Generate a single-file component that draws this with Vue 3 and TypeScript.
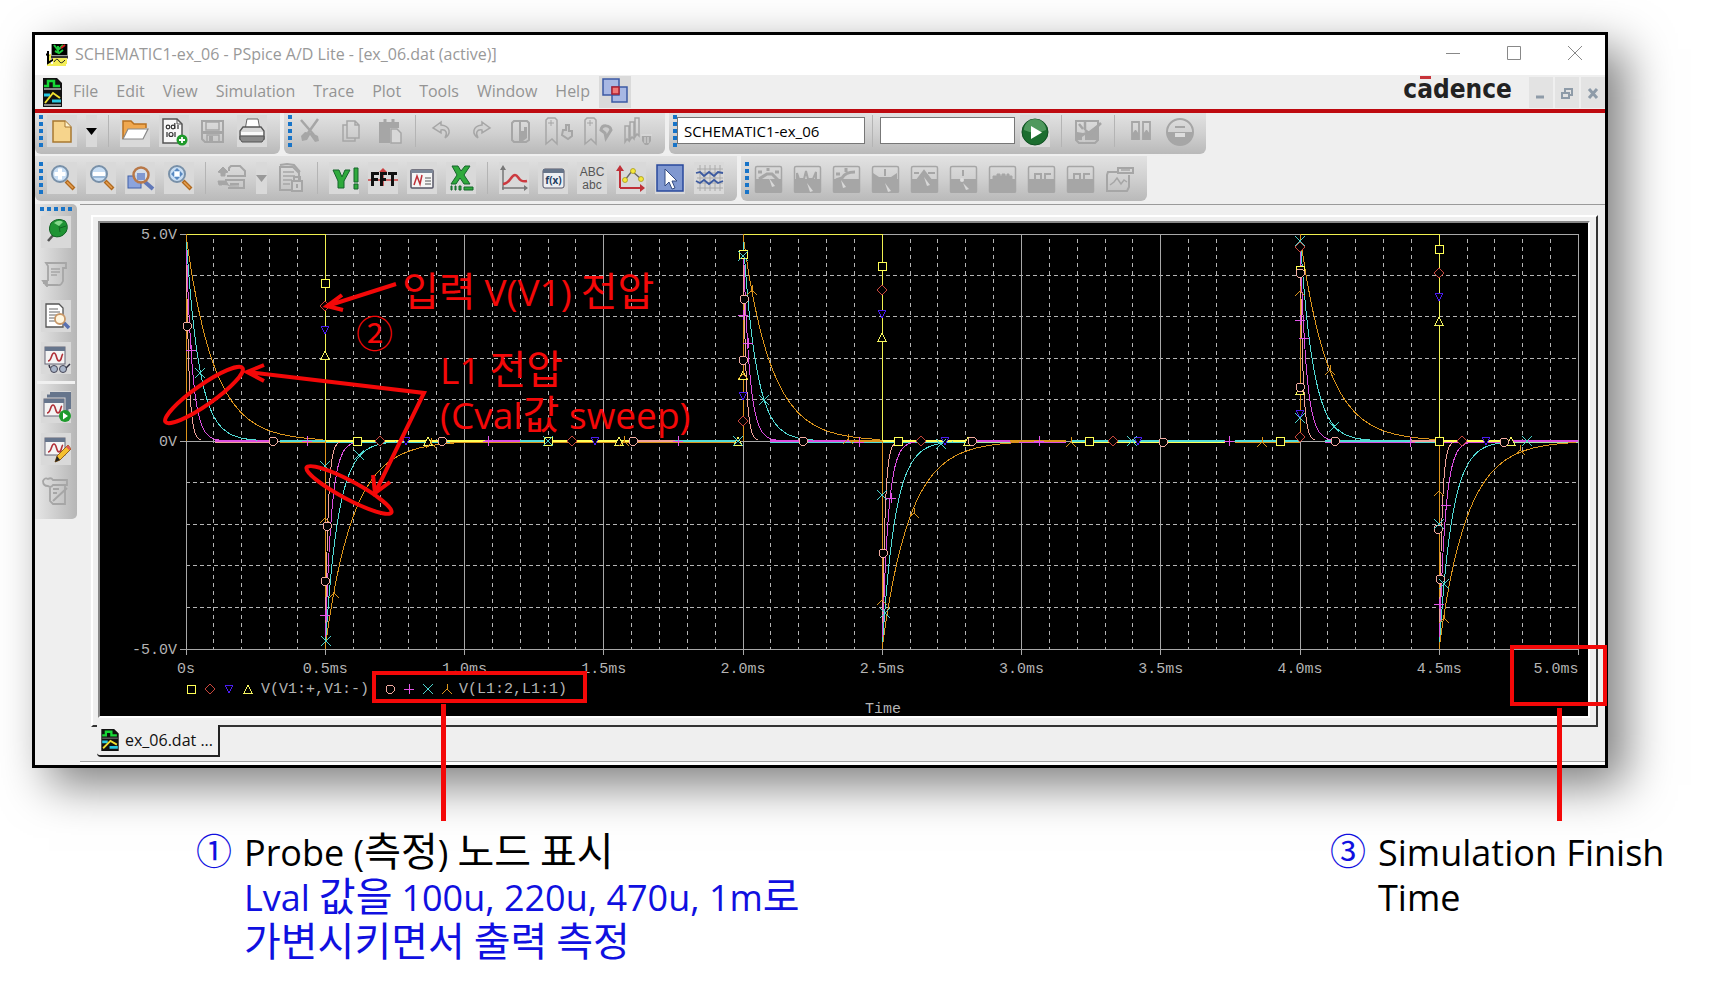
<script setup lang="ts">
interface Tool {
  icon: string
  label: string
  kind?: 'off' | 'drop' | 'sep'
}

interface Marker {
  shape: string
  x: number
  y: number
}

const sep: Tool = { icon: '', label: '', kind: 'sep' }
const off = (icon: string, label: string): Tool => ({ icon, label, kind: 'off' })
const on = (icon: string, label: string): Tool => ({ icon, label })

const menus = ['File', 'Edit', 'View', 'Simulation', 'Trace', 'Plot', 'Tools', 'Window', 'Help']

const fileTools: Tool[] = [
  on('new', 'New'), { icon: 'drop', label: 'New options', kind: 'drop' }, sep,
  on('open', 'Open'), on('append', 'Append data'), off('save', 'Save'), on('print', 'Print'),
]
const editTools: Tool[] = [
  off('cut', 'Cut'), off('copy', 'Copy'), off('paste', 'Paste'), sep,
  off('undo', 'Undo'), off('redo', 'Redo'), off('toggle', 'Toggle bookmark'),
  off('nextmark', 'Next bookmark'), off('prevmark', 'Previous bookmark'), off('clearmarks', 'Clear bookmarks'),
]
const runTools: Tool[] = [
  sep, off('editprofile', 'Edit profile'), sep, off('pause', 'Pause'), off('stop', 'Stop'),
]
const probeTools: Tool[] = [
  on('zoomin', 'Zoom in'), on('zoomout', 'Zoom out'), on('zoomarea', 'Zoom area'), on('zoomfit', 'Zoom fit'), sep,
  off('cascade', 'Sweep'), { icon: 'dropoff', label: 'Sweep options', kind: 'drop' }, off('lock', 'Lock'), sep,
  on('yaxis', 'Log axis'), on('fft', 'FFT'), on('perf', 'Performance'), on('xaxis', 'Log X axis'), sep,
  on('trace', 'Add trace'), on('eval', 'Evaluate'), on('abc', 'Text label'), on('points', 'Mark points'),
  on('cursor', 'Cursor'), on('grid', 'Display grid'),
]
const cursorTools: Tool[] = [
  off('c1', 'Peak'), off('c2', 'Trough'), off('c3', 'Slope'), off('c4', 'Minimum'), off('c5', 'Maximum'),
  off('c6', 'Point'), off('c7', 'Search'), off('c8', 'Next transition'), off('c9', 'Previous transition'), off('mark', 'Mark label'),
]
const sideTools: Tool[] = [
  on('pin', 'Pin'), off('scroll', 'Netlist'), on('find', 'View output file'), on('glasses', 'View results'), sep,
  on('queue', 'Simulation queue'), on('pencil', 'Edit settings'), off('notes', 'Messages'),
]

const g = '#a6a6a6'
const lens = (inner: string, ring = '#7890a8') =>
  `<path d="M19 18l8 8" stroke="#b06a20" stroke-width="4"/><path d="M20 19l6 6" stroke="#e8a050" stroke-width="1.5"/><circle cx="13" cy="11" r="8" fill="#c8def4" stroke="${ring}" stroke-width="2"/>${inner}`
const gauge = (inner: string) =>
  `<rect x="2.500" y="3.500" width="26" height="26" rx="1.500" fill="none" stroke="${g}" stroke-width="1.500"/><path d="M2 16H28V29H2Z" fill="${g}"/>${inner}`
const chart = (x: number, y: number) =>
  `<rect x="${x}" y="${y}" width="20" height="17" fill="#f4f4f4" stroke="#667"/><rect x="${x}" y="${y}" width="20" height="4" fill="#66758c"/><path d="M${x + 3} ${y + 14}c4 0 3-8 6-8s2 8 5 8 2-6 4-7" fill="none" stroke="#b03038" stroke-width="1.600"/>`

const icons: Record<string, string> = {
  new: '<path d="M6 5h12l6 6v15H6z" fill="#f6d48c" stroke="#a87830" stroke-width="1.500"/><path d="M18 5v6h6" fill="#fff2cc" stroke="#a87830"/>',
  drop: '<path d="M0 12h11l-5.500 7z" fill="#000"/>',
  dropoff: '<path d="M0 12h11l-5.500 7z" fill="#999"/>',
  open: '<path d="M3 23V5h8l3 3h12v4" fill="#f0a850" stroke="#b87020" stroke-width="1.500"/><path d="M3 23l5-10h20l-5 10z" fill="#fff" stroke="#888" stroke-width="1.200"/>',
  append: '<path d="M4 3h14l5 5v19H4z" fill="#f8f8f8" stroke="#555" stroke-width="1.500"/><path d="M18 3v5h5" fill="none" stroke="#555"/><g fill="none" stroke="#333" stroke-width="1.200"><circle cx="9" cy="11" r="1.800"/><circle cx="14" cy="11" r="1.800"/><path d="M15.800 7v6M19 9v4M8 16v5M16 16v5"/><circle cx="12" cy="18.500" r="2"/></g><circle cx="23" cy="24" r="5.500" fill="#1e9a2a"/><path d="M20 24h6M23 21v6" stroke="#fff" stroke-width="1.800"/>',
  save: `<path d="M4 5h21v21H7l-3-3z" fill="none" stroke="${g}" stroke-width="2"/><path d="M8 6h13v8H8zM9 19h12v7H9z" fill="none" stroke="${g}" stroke-width="1.500"/><path d="M4 15h21v3H4zM11 20h4v6h-4z" fill="${g}"/>`,
  print: '<path d="M8 14L10 3h11l2 11z" fill="#fff" stroke="#666"/><path d="M3 15l3-4h18l3 4v8H3z" fill="#d8d8d8" stroke="#555" stroke-width="1.300"/><path d="M4 16h22v3H4z" fill="#fafafa"/><path d="M3 20h24v3l-2 3H5l-2-3z" fill="#8a8a8a" stroke="#555"/>',
  cut: `<path d="M5 4l13 15M22 3L12 17" stroke="${g}" stroke-width="2.500"/><path d="M9 16l-4 4 1 5 5-1 3-5 5 7 4-1-1-5-6-3z" fill="${g}"/>`,
  copy: `<path d="M12 5h8l4 4v13H12zM12 9H8v16h12v-3M20 5v4h4" fill="none" stroke="${g}" stroke-width="1.500"/>`,
  paste: `<path d="M5 6h20v6h-9v15H5z" fill="${g}"/><path d="M11 3v3M19 3v3" stroke="${g}" stroke-width="3"/><path d="M17 13h6l4 4v10H17z" fill="#d8d8d8" stroke="${g}" stroke-width="1.500"/>`,
  undo: `<path d="M14 6l-8 6 8 5v-3c5-1 7 3 4 8 6-4 6-12-4-13z" fill="#d2d2d2" stroke="${g}" stroke-width="1.500"/>`,
  redo: `<path d="M16 6l8 6-8 5v-3c-5-1-7 3-4 8-6-4-6-12 4-13z" fill="#d2d2d2" stroke="${g}" stroke-width="1.500"/>`,
  toggle: `<path d="M7 7l2-2h13l2 2v17l-3 2H9l-2-2zM15 5v21" fill="none" stroke="${g}" stroke-width="2"/><path d="M16 15h3v-4h3v11l-4 3h-2z" fill="${g}"/>`,
  nextmark: `<path d="M2 4l2-2h7l2 2v24l-5-5-6 5z" fill="none" stroke="${g}" stroke-width="1.500"/><path d="M7 4v6M4 7h6" stroke="${g}"/><path d="M19 14h3V9h3v6h3v5l-4 3-6-4z" fill="#ccc" stroke="${g}" stroke-width="2"/>`,
  prevmark: `<path d="M2 4l2-2h7l2 2v24l-5-5-6 5z" fill="none" stroke="${g}" stroke-width="1.500"/><path d="M7 4v6M4 7h6" stroke="${g}"/><path d="M18 14c1-6 9-5 10 0l-5 8-1-5z" fill="#ccc" stroke="${g}" stroke-width="3"/>`,
  clearmarks: `<path d="M3 10h4v15l-2-2-2 3zM8 6h4v17l-2-2-2 3zM13 2h4v18l-2-2-2 3z" fill="none" stroke="${g}" stroke-width="1.500"/><path d="M20 20h9v5l-3 4h-3l-3-4z" fill="${g}"/><path d="M19 19h11M23 21v6M26 21v6" stroke="#ddd"/>`,
  play: '<circle cx="15" cy="16" r="13" fill="#1c6e30" stroke="#0f5022"/><path d="M4 14a11 11 0 0 1 22 0q-11 5-22 0" fill="#6cb078" opacity=".65"/><path d="M11 10l11 6.500-11 6.500z" fill="#fff"/>',
  editprofile: `<path d="M3 5h22v19l-3 3H6l-3-3z" fill="none" stroke="${g}" stroke-width="2"/><path d="M4 16l6 1 6-2 8-6v15H4z" fill="${g}"/><path d="M6 8l4 5M12 6v8M12 14l5 4L28 7" stroke="${g}" stroke-width="2.500" fill="none"/><path d="M9 25v-4l3-2v7" fill="#ccc"/>`,
  pause: `<path d="M6 6h7v17H6zM17 6h7v17h-7z" fill="none" stroke="${g}" stroke-width="1.800"/><path d="M6 18l3-4h1l3 4v6H6zM17 18l3-4h1l3 4v6h-7z" fill="${g}"/>`,
  stop: `<circle cx="15" cy="16" r="13" fill="none" stroke="${g}" stroke-width="2"/><path d="M2 16h26a13 13 0 0 1-26 0z" fill="${g}"/><path d="M10 11h10" stroke="${g}" stroke-width="2"/><path d="M10 17h10v4H10z" fill="#ddd"/>`,
  zoomin: lens('<path d="M13 5.500v11M7.500 11h11" stroke="#fff" stroke-width="4"/>'),
  zoomout: lens('<path d="M7 11h12" stroke="#fff" stroke-width="4"/><path d="M7 14h12" stroke="#6d93bb" stroke-width="1"/>'),
  zoomarea: '<rect x="3" y="13" width="13" height="12" fill="#8ca4dc" stroke="#4060a8"/><path d="M20 19l8 7" stroke="#6078b8" stroke-width="4"/><circle cx="16" cy="12" r="7.500" fill="#d4e0ee" fill-opacity=".8" stroke="#b87848" stroke-width="2.500"/><rect x="12" y="10" width="8" height="7" fill="#8098d0"/>',
  zoomfit: lens('<path d="M13 5l3 3h-6zM13 17l3-3h-6zM7 11l3-3v6zM19 11l-3-3v6z" fill="#5888c0"/><rect x="11" y="9" width="4" height="4" fill="#fff"/>'),
  cascade: `<path d="M12 8V5l2-2h9l5 5v5H17M8 17h19v8H11" fill="none" stroke="${g}" stroke-width="2"/><path d="M1 9l5-5 5 5-3 1v3H4v-3zM5 22H2l-1-4h8l3 5h10" fill="${g}" stroke="${g}"/><path d="M10 13h12M13 21h9" stroke="${g}" stroke-width="2"/>`,
  lock: `<path d="M4 4h13l6 6v17H4z" fill="none" stroke="${g}" stroke-width="2"/><path d="M4 2l7-1 7 1 6 7" stroke="${g}" stroke-width="2" fill="none"/><path d="M7 9h11M7 13h12M7 17h9M7 21h7" stroke="${g}" stroke-width="1.500"/><path d="M18 18v-4h6v4" stroke="${g}" stroke-width="2" fill="none"/><rect x="16" y="18" width="10" height="10" fill="#d0d0d0" stroke="${g}" stroke-width="2"/><path d="M21 21v4" stroke="${g}" stroke-width="2"/>`,
  yaxis: '<path d="M4 7h6l3 7 3-7h5l-6 11v7H9v-7z" fill="#2faa3c" stroke="#14642a"/><path d="M25 5h4v14h-4zM25 21h4v5h-4z" fill="#2faa3c" stroke="#14642a"/>',
  fft: '<path d="M15 8v15M0 17h30" stroke="#cc4040" stroke-width="1.500"/><path d="M11 9l4-4 4 4z" fill="#cc4040"/><g fill="none" stroke="#111" stroke-width="3"><path d="M4.500 23V10.500H11M4.500 16.500H10M13.500 23V10.500H19M13.500 16.500H18M20 10.500h9M24.500 10v13"/></g>',
  perf: '<rect x="4" y="7" width="22" height="18" rx="1" fill="#f6f6f6" stroke="#556" stroke-width="1.500"/><path d="M4 7h22v3H4z" fill="#7c8798"/><path d="M7 22l3-9 3 8 2-9" fill="none" stroke="#c03038" stroke-width="1.500"/><path d="M18 15h6M18 18h6M18 21h6" stroke="#555"/>',
  xaxis: '<path d="M6 3h6l3 5 4-5h5l-6 9 6 9h-6l-4-6-4 6H5l6-9z" fill="#2faa3c" stroke="#14642a"/><path d="M5 23h1v4H5zM9 23h1v4H9zM13 23h2v4h-2zM18 24h9v3h-9z" fill="#2faa3c" stroke="#14642a"/>',
  trace: '<path d="M4 27V5M3 25h25" stroke="#777" stroke-width="1.500"/><path d="M1 7l3-5 3 5zM25 22l4 3-4 3z" fill="#777"/><path d="M4 21c7 0 8-9 12-9s3 8 12 6" fill="none" stroke="#cc3a40" stroke-width="2.500"/>',
  eval: '<rect x="5" y="6" width="21" height="19" rx="2" fill="#eceef2" stroke="#556"/><rect x="5" y="6" width="21" height="4" fill="#667489"/><text x="15.500" y="21" font-family="Open Sans, sans-serif" font-size="10" font-weight="700" text-anchor="middle" fill="#223c60">f(x)</text>',
  abc: '<text x="15" y="13" font-family="Liberation Sans, sans-serif" font-size="12" text-anchor="middle" fill="#555">ABC</text><text x="15" y="26" font-family="Liberation Sans, sans-serif" font-size="12" text-anchor="middle" fill="#555">abc</text>',
  points: '<path d="M4 25V5M4 25h23" stroke="#c03038" stroke-width="2"/><path d="M0 8l4-6 4 6zM24 21l5 4-5 4z" fill="#c03038"/><path d="M9 17l7-9 9 8" fill="none" stroke="#666" stroke-width="1.300"/><g fill="#f4e83c" stroke="#a09010" stroke-width=".7"><circle cx="9" cy="17" r="2.500"/><circle cx="17" cy="8" r="2.500"/><circle cx="25" cy="16" r="2.500"/></g>',
  cursor: '<rect x="2" y="2" width="26" height="26" fill="#8098d0" stroke="#28489c" stroke-width="1.500"/><path d="M10 6v17l4-4 3 7 3-1-3-7h5z" fill="#fff" stroke="#334a80"/>',
  grid: '<path d="M3 6h26M3 10h26M3 15h26M3 20h26M3 25h26M6 2v26M11 2v26M16 2v26M21 2v26M26 2v26" stroke="#aaa"/><path d="M2 10l4-1 4 4 5-4 5 4 4-4 5 1M2 18l4 2 4-3 5 4 5-4 4 3 5-2" fill="none" stroke="#3c5aa0" stroke-width="1.800"/>',
  c1: gauge(`<path d="M6 16l8-5h5l7 7M15 5v3M5 9h4M22 9h4" stroke="${g}" stroke-width="3" fill="none"/><path d="M16 15l6 8-3 1z" fill="#d8d8d8"/>`),
  c2: gauge(`<path d="M5 16v-6l2 6h5l2-8 2 8h5l3-7v7" stroke="${g}" stroke-width="2" fill="none"/><path d="M15 20l6 8-3 1z" fill="#d8d8d8"/>`),
  c3: gauge(`<path d="M5 17l6-2q3-6 13-6M15 5v4M5 11h4" stroke="${g}" stroke-width="3" fill="none"/><path d="M10 17l5 7-3 1z" fill="#d8d8d8"/>`),
  c4: gauge(`<path d="M3 10l6 4h12l6-4v8H3z" fill="${g}"/><path d="M15 6v7" stroke="${g}" stroke-width="2"/><path d="M15 20l6 8-3 1z" fill="#d8d8d8"/>`),
  c5: gauge(`<path d="M5 10h5M19 10h7M8 17l7-9 7 9z" stroke="${g}" stroke-width="2" fill="${g}"/><path d="M15 14l6 8-3 1z" fill="#d8d8d8"/>`),
  c6: gauge(`<path d="M15 7v6" stroke="${g}" stroke-width="2"/><circle cx="14" cy="17" r="2" fill="#ddd"/><path d="M15 20l6 6-3 1z" fill="#d8d8d8"/>`),
  c7: gauge(`<path d="M6 16v-3h19v3zM10 13v-2h3v2M15 13v-2h3v2M20 13v-2h2v2" stroke="${g}" fill="${g}"/>`),
  c8: gauge(`<path d="M9 16v-5h6v5M19 16v-5h6" stroke="${g}" stroke-width="2" fill="none"/>`),
  c9: gauge(`<path d="M9 16v-5h6v5M19 16v-5h6" stroke="${g}" stroke-width="2" fill="none"/>`),
  mark: `<path d="M14 5h15v5H14zM13 9H4l-1 3v16h20l2-4V12" fill="none" stroke="${g}" stroke-width="2"/><path d="M17 7h9M6 22l4-3 3-4 4 6 3-4 3 2" fill="none" stroke="${g}" stroke-width="1.500"/>`,
  pin: '<path d="M7 24l7-8" stroke="#555" stroke-width="2.500"/><path d="M10 6q6-6 14-2 4 5 1 11-5 7-13 4-6-5-2-13z" fill="#1f9434" stroke="#106422"/><path d="M13 6q5-4 9-1l-4 4z" fill="#85d88c"/><path d="M18 9l1 6M19 11l6-2" stroke="#106422"/>',
  scroll: `<path d="M7 22V7l-2-3h20v5h-3v13q-2 5-5 4H5l-3-4h5M2 24h4v4" fill="none" stroke="${g}" stroke-width="1.800"/><path d="M10 10h9M10 13h9M10 16h6" stroke="${g}" stroke-width="1.300"/>`,
  find: '<path d="M5 3h13l4 4v19H5z" fill="#fff" stroke="#555" stroke-width="1.300"/><path d="M8 8h9M8 11h11M8 14h11M8 17h8M8 20h7" stroke="#666"/><path d="M22 21l6 6" stroke="#5870b0" stroke-width="3.500"/><circle cx="19" cy="18" r="5" fill="#fff6e0" stroke="#c89868" stroke-width="1.800"/>',
  glasses: chart(4, 4) + '<circle cx="13" cy="26" r="3.500" fill="#a8b4c8" stroke="#445"/><circle cx="22" cy="26" r="3.500" fill="#a8b4c8" stroke="#445"/><path d="M9 25l-1-3M25 25l4-4" stroke="#334" stroke-width="1.500"/>',
  queue: '<path d="M9 1h20v16M6 4h20v16" fill="none" stroke="#66758c" stroke-width="3"/>' + chart(3, 7) + '<circle cx="24" cy="24" r="6" fill="#1d9a2c"/><path d="M22 20.500l5 3.500-5 3.500z" fill="#fff"/>',
  pencil: chart(4, 4) + '<path d="M14 28l2-6L27 11l3 4-11 11z" fill="#f4c030" stroke="#906020"/><path d="M14 28l2-6 3 4z" fill="#222"/><path d="M25 13l2-2 3 4-2 1z" fill="#e05858"/>',
  notes: `<path d="M9 10v15l3 3h12V9M2 5q2-4 5-2 3-2 5 1h14v5H12q-2 3-5 1-5 0-5-5z" fill="none" stroke="${g}" stroke-width="1.800"/><path d="M12 13h6M12 17h4M12 25L26 12" stroke="${g}" stroke-width="2"/>`,
}

// Plot geometry: 5 ms across, ±5 V around the zero line.
const left = 186
const top = 234
const zero = 441
const bottom = 649
const msWidth = 278.5
const voltHeight = 41.5
const right = left + msWidth * 5
const px = (ms: number) => left + ms * msWidth
const py = (v: number) => zero - v * voltHeight

const minor = Array.from({ length: 50 }, (_, i) => i).filter((i) => i % 5 !== 0).map((i) => px(i / 10))
const major = [0, 1, 1.5, 2, 3, 3.5, 4, 5].map(px)
const ticks = Array.from({ length: 11 }, (_, i) => px(i / 2))
const rows = [1, 2, 3, 4, -1, -2, -3, -4].map(py)
const xLabels = Array.from({ length: 10 }, (_, i) => ({ x: px(i / 2), text: i === 0 ? '0s' : `${(i / 2).toFixed(1)}ms` }))

const decay = (tau: number, start: number, sign: number) => {
  const pts: string[] = []
  for (let i = 0; i <= 44; i++) {
    const t = (i / 44) * tau * 5.4
    if (start + t > 5 || t > 0.5) break
    pts.push(`${px(start + t).toFixed(1)},${py(sign * 4.97 * Math.exp(-t / tau)).toFixed(1)}`)
  }
  return pts.join(' ')
}
const edges = [[0, 1], [0.5, -1], [2, 1], [2.5, -1], [4, 1], [4.5, -1]]
const families = [
  { color: '#f0a39a', tau: 0.01 },
  { color: '#dc4fe0', tau: 0.022 },
  { color: '#52dcd6', tau: 0.047 },
  { color: '#dc951c', tau: 0.1 },
]
const curves = families.flatMap((f) => edges.map(([s, sign]) => ({ color: f.color, points: decay(f.tau, s, sign) })))

const zeroRuns = [
  [215, 273, '#dc4fe0', '#f0a39a'], [280, 325, '#52dcd6', '#dc951c'], [325, 450, '#ffff55', '#52dcd6'],
  [450, 485, '#ffff55', '#dc951c'], [485, 520, '#dc4fe0', '#dc951c'], [520, 545, '#52dcd6', '#dc951c'],
  [550, 638, '#ffff55', '#dc951c'], [638, 675, '#f0a39a', '#dc951c'], [675, 738, '#52dcd6', '#dc951c'],
  [770, 850, '#dc4fe0', '#52dcd6'], [850, 882, '#dc951c', '#52dcd6'], [882, 975, '#ffff55', '#52dcd6'],
  [975, 1010, '#dc4fe0', '#a4e8a0'], [1010, 1066, '#dc951c', '#dc4fe0'], [1072, 1160, '#52dcd6', '#ffff55'],
  [1160, 1225, '#52dcd6', '#ffff55'], [1235, 1300, '#52dcd6', '#dc951c'], [1325, 1410, '#52dcd6', '#dc4fe0'],
  [1412, 1439, '#f0a39a', '#52dcd6'], [1439, 1510, '#ffff55', '#dc4fe0'], [1510, 1578, '#dc4fe0', '#a4e8a0'],
] as [number, number, string, string][]

const shapes: Record<string, { d: string; color: string; fill: string }> = {
  s: { d: 'M-4-4H4V4H-4Z', color: '#ffff55', fill: '#000' },
  d: { d: 'M0-5L5 0L0 5L-5 0Z', color: '#c8463c', fill: '#000' },
  v: { d: 'M-4-4H4L0 4Z', color: '#4a1cf0', fill: '#000' },
  a: { d: 'M-4 4H4L0-4Z', color: '#f4f460', fill: '#000' },
  o: { d: 'M-2-4H2L4-2V2L2 4H-2L-4 2V-2Z', color: '#f0aaa0', fill: '#000' },
  p: { d: 'M-5 0H5M0-5V5', color: '#e455e8', fill: 'none' },
  x: { d: 'M-5-5L5 5M-5 5L5-5', color: '#4cd2cc', fill: 'none' },
  y: { d: 'M0-5V0L-5 5M0 0L5 5', color: '#dc951c', fill: 'none' },
}
const read = (text: string): Marker[] =>
  text.split(' ').map((item) => {
    const [shape, x, y] = item.split(',')
    return { shape, x: Number(x), y: Number(y) }
  })
const markers = read(
  's,325,283 d,325,306 v,325,330 a,325,355 o,187,326 p,191,350 x,200,373 o,273,441 p,307,441 s,357,441 d,380,441 v,406,441 a,428,441 y,431,443 o,442,441 p,488,441 s,548,441 x,548,441 d,572,441 v,595,441 a,619,441 y,624,441 o,633,441 p,678,441 ' +
  'x,359,455 x,325,466 y,325,518 o,327,526 o,325,581 y,334,593 p,325,615 x,326,641 ' +
  's,743,254 x,743,256 y,752,290 o,744,299 p,743,315 p,748,343 o,743,360 a,743,375 y,743,374 v,743,396 d,743,421 x,764,400 a,738,441 x,738,441 o,803,441 y,848,439 p,859,442 s,898,441 d,921,441 v,945,441 x,941,444 a,968,441 o,972,441 p,1039,441 y,1071,442 s,1089,441 d,1113,441 v,1138,441 x,1132,441 o,1163,442 ' +
  's,882,266 d,882,290 v,882,314 a,882,337 x,882,495 p,891,498 o,883,553 y,882,600 x,885,613 y,914,513 ' +
  'p,1229,441 y,1262,442 s,1280,441 d,1300,437 v,1300,414 x,1300,418 a,1300,390 o,1300,387 p,1300,320 y,1300,291 s,1300,270 o,1300,273 d,1300,247 x,1300,241 p,1304,338 y,1330,370 x,1334,427 o,1335,441 p,1410,442 ' +
  's,1439,249 d,1439,273 v,1439,297 a,1439,321 s,1439,441 y,1439,491 o,1438,529 x,1439,524 o,1440,579 x,1444,584 p,1439,604 y,1444,618 p,1446,505 d,1462,441 v,1486,441 a,1511,441 o,1504,442 x,1527,441 y,1520,450 ' +
  's,191,689 d,210,689 v,229,689 a,248,689 o,390,689 p,409,689 x,428,689 y,447,689',
)
</script>

<template>
  <main class="page">
    <section class="window">
      <header class="titlebar">
        <svg class="appicon" viewBox="0 0 22 22" aria-hidden="true">
          <path d="M1 10h4v10h15v2H1z" fill="#f4ee58" /><path d="M5 0h17v15H5z" fill="#9a9a9a" /><path d="M6 0h15v11H6z" fill="#000" />
          <path d="M8 1l4 5 5-5M12 2v7M9 7l4 2 4-3" stroke="#1cc83c" stroke-width="2" fill="none" /><path d="M15 4l4-3" stroke="#d02020" stroke-width="2" />
          <path d="M0 10l3 2M2 7v12l6-4v5" stroke="#000" stroke-width="2" fill="none" /><path d="M7 14h14v6H7z" fill="#f4ee58" /><path d="M8 18q3-5 5-1t6-1" stroke="#222" fill="none" /><path d="M5 12h17v2H5z" fill="#333" />
        </svg>
        <h1 class="title">SCHEMATIC1-ex_06 - PSpice A/D Lite - [ex_06.dat (active)]</h1>
        <div class="controls">
          <button type="button" aria-label="Minimize"><svg viewBox="0 0 16 16"><path d="M1 8.500h14" /></svg></button>
          <button type="button" aria-label="Maximize"><svg viewBox="0 0 16 16"><path d="M1.500 1.500h13v13h-13z" /></svg></button>
          <button type="button" aria-label="Close"><svg viewBox="0 0 16 16"><path d="M1 1l14 14M15 1L1 15" /></svg></button>
        </div>
      </header>

      <nav class="menubar">
        <svg class="docicon" viewBox="0 0 19 29" aria-hidden="true">
          <path d="M0 0h14l5 5v24H0z" fill="#111" /><path d="M1 11h17M1 27h17" stroke="#888" stroke-width="2" /><path d="M1 8h4V3h6v5h6" stroke="#16d836" stroke-width="2.500" fill="none" />
          <path d="M1 17h6M9 23h9" stroke="#28c8e0" stroke-width="3" /><path d="M2 25l8-10 7 5" stroke="#f0e030" stroke-width="2" fill="none" />
        </svg>
        <button v-for="m in menus" :key="m" type="button" class="menu">{{ m }}</button>
        <button type="button" class="layers" aria-label="Layers">
          <svg viewBox="0 0 32 32"><path d="M4 3h16v16H4zM13 11h15v15H13z" fill="#a8b8e4" stroke="#3c5aa4" stroke-width="1.500" /><rect x="13" y="11" width="7" height="7" fill="#f07878" stroke="#b02030" stroke-width="1.500" /></svg>
        </button>
        <strong class="brand">c<span class="macron">a</span>dence</strong>
        <div class="mdi-controls">
          <button type="button" aria-label="Minimize document"><svg viewBox="0 0 24 31"><path d="M7 20h8" stroke-width="3" /></svg></button>
          <button type="button" aria-label="Restore document"><svg viewBox="0 0 24 31"><path d="M10 15v-3h7v6h-3M7 16h7v5H7z" stroke-width="2" /></svg></button>
          <button type="button" aria-label="Close document"><svg viewBox="0 0 24 31"><path d="M8 12l8 9M16 12l-8 9" stroke-width="3" /></svg></button>
        </div>
      </nav>

      <div class="bars">
        <div class="row first">
          <div v-for="(set, n) in [fileTools, editTools]" :key="n" class="group" role="toolbar">
            <i class="grip"></i>
            <template v-for="(t, i) in set" :key="i">
              <i v-if="t.kind === 'sep'" class="sep"></i>
              <button v-else type="button" :class="['tool', t.kind]" :aria-label="t.label"><svg :viewBox="t.kind === 'drop' ? '0 0 11 30' : '0 0 30 30'" v-html="icons[t.icon]"></svg></button>
            </template>
          </div>
          <div class="group run" role="toolbar">
            <i class="grip"></i>
            <div class="fields">
              <input class="profile" type="text" value="SCHEMATIC1-ex_06" aria-label="Simulation profile">
              <i class="sep"></i>
              <input class="value" type="text" aria-label="Run until">
              <button type="button" class="tool" aria-label="Run"><svg viewBox="0 0 30 30" v-html="icons.play"></svg></button>
            </div>
            <template v-for="(t, i) in runTools" :key="i">
              <i v-if="t.kind === 'sep'" class="sep"></i>
              <button v-else type="button" :class="['tool', t.kind]" :aria-label="t.label"><svg viewBox="0 0 30 30" v-html="icons[t.icon]"></svg></button>
            </template>
          </div>
        </div>
        <div class="row second">
          <div v-for="(set, n) in [probeTools, cursorTools]" :key="n" class="group" role="toolbar">
            <i class="grip"></i>
            <template v-for="(t, i) in set" :key="i">
              <i v-if="t.kind === 'sep'" class="sep"></i>
              <button v-else type="button" :class="['tool', t.kind]" :aria-label="t.label"><svg :viewBox="t.kind === 'drop' ? '0 0 11 30' : '0 0 30 30'" v-html="icons[t.icon]"></svg></button>
            </template>
          </div>
        </div>
      </div>

      <div class="body">
        <div class="sidebar" role="toolbar">
          <i class="hgrip"></i>
          <template v-for="(t, i) in sideTools" :key="i">
            <i v-if="t.kind === 'sep'" class="hsep"></i>
            <button v-else type="button" :class="['tool', t.kind]" :aria-label="t.label"><svg viewBox="0 0 30 30" v-html="icons[t.icon]"></svg></button>
          </template>
        </div>

        <div class="mdi">
          <div class="frame">
            <svg class="plot" viewBox="100 223 1488 493" role="img" aria-label="Probe plot">
              <rect x="100" y="223" width="1488" height="493" fill="#000" />
              <g class="dash">
                <line v-for="x in minor" :key="'m' + x" class="column" :x1="x" :x2="x" :y1="top + 5" :y2="bottom" />
                <line v-for="y in rows" :key="'r' + y" :x1="left" :x2="right" :y1="y" :y2="y" />
              </g>
              <g class="axis">
                <path :d="`M${left - 6} ${top}H${right}M${left - 6} ${zero}H${right}M${left - 6} ${bottom}H${right}`" />
                <line v-for="x in major" :key="x" :x1="x" :x2="x" :y1="top" :y2="bottom" />
                <line v-for="x in ticks" :key="'t' + x" :x1="x" :x2="x" :y1="bottom" :y2="bottom + 6" />
              </g>
              <g class="trace">
                <template v-for="(r, i) in zeroRuns" :key="i">
                  <path :d="`M${r[0]} 441H${r[1]}`" :stroke="r[2]" stroke-width="2" />
                  <path :d="`M${r[0]} 442H${r[1]}`" :stroke="r[3]" />
                </template>
                <path v-for="s in [0, 2, 4]" :key="'q' + s" :d="`M${px(s)} ${top}H${px(s + 0.5)}V${zero}`" stroke="#f0f050" />
                <path v-for="s in [0, 2, 4]" :key="'u' + s" :d="`M${px(s)} ${zero}V${top}M${px(s + 0.5)} ${zero}V${bottom}`" stroke="#dc951c" />
                <polyline v-for="(c, i) in curves" :key="'c' + i" :points="c.points" :stroke="c.color" />
              </g>
              <g class="markers">
                <path v-for="(m, i) in markers" :key="i" :d="shapes[m.shape].d" :transform="`translate(${m.x} ${m.y})`" :stroke="shapes[m.shape].color" :fill="shapes[m.shape].fill" />
              </g>
              <g class="labels">
                <text x="177" y="239" text-anchor="end">5.0V</text>
                <text x="177" y="446" text-anchor="end">0V</text>
                <text x="177" y="654" text-anchor="end">-5.0V</text>
                <text v-for="l in xLabels" :key="l.text" :x="l.x" y="673" text-anchor="middle">{{ l.text }}</text>
                <text :x="right" y="673" text-anchor="end">5.0ms</text>
                <text x="261" y="693">V(V1:+,V1:-)</text>
                <text x="459" y="693">V(L1:2,L1:1)</text>
                <text x="883" y="713" text-anchor="middle">Time</text>
              </g>

              <g class="callout">
                <ellipse cx="204" cy="395" rx="47" ry="10" transform="rotate(-35 204 395)" />
                <ellipse cx="349" cy="490" rx="48" ry="9" transform="rotate(28 349 490)" />
                <path d="M396 284L327 306M342 295L327 306L343 310" />
                <path d="M247 372L424 393L375 493M264 365L247 372L264 381M373 475L375 493L390 482" />
                <rect x="374" y="673" width="211" height="28" />
                <rect x="1512" y="647" width="93" height="57" />
                <path d="M443.500 704V821M1559.500 708V821" class="leader" />
              </g>
              <g class="remarks">
                <text x="402" y="306"><tspan class="ko">입력 </tspan>V(V1)<tspan class="ko"> 전압</tspan></text>
                <text x="356" y="348" class="num">②</text>
                <text x="440" y="384">L1<tspan class="ko"> 전압</tspan></text>
                <text x="440" y="429">(Cval<tspan class="ko">값</tspan> sweep)</text>
              </g>
            </svg>
          </div>
          <div class="tabs">
            <button type="button" class="tab">
              <svg viewBox="0 0 19 24" aria-hidden="true">
                <path d="M0 0h14l5 5v19H0z" fill="#111" /><path d="M1 10h17" stroke="#888" /><path d="M1 7h4V3h6v4h6" stroke="#16d836" stroke-width="2.500" fill="none" />
                <path d="M1 14h6M9 20h9" stroke="#28c8e0" stroke-width="3" /><path d="M2 21l8-8 7 4" stroke="#f0e030" stroke-width="2" fill="none" />
              </svg>
              <span>ex_06.dat ...</span>
            </button>
          </div>
        </div>
      </div>
    </section>

    <section class="notes">
      <div class="note">
        <span class="mark">①</span>
        <div>
          <p>Probe (<span class="ko">측정</span>)<span class="ko"> 노드 표시</span></p>
          <p class="blue">Lval<span class="ko"> 값을 </span>100u, 220u, 470u, 1m<span class="ko">로</span></p>
          <p class="blue"><span class="ko">가변시키면서 출력 측정</span></p>
        </div>
      </div>
      <div class="note finish">
        <span class="mark">③</span>
        <p>Simulation Finish Time</p>
      </div>
    </section>
  </main>
</template>

<style>
body {
  background: #fff;
}
</style>

<style scoped>
.page {
  box-sizing: border-box;
  padding: 32px 0 20px;
  font-family: "Open Sans", "Noto Sans CJK KR", sans-serif;
  overflow: hidden;
}

button {
  margin: 0;
  padding: 0;
  border: 0;
  background: none;
  font: inherit;
  color: inherit;
}

p {
  margin: 0;
}

.window {
  margin: 0 114px 0 32px;
  border: 3px solid #000;
  background: #efefef;
  box-shadow: 17px 17px 44px rgba(0, 0, 0, 0.51);
}

.titlebar {
  display: flex;
  align-items: center;
  height: 40px;
  padding-left: 11px;
  background: #fff;
}

.appicon {
  width: 22px;
  height: 22px;
}

.title {
  margin: 0 auto 0 7px;
  padding-bottom: 2px;
  font-size: 16px;
  font-weight: 400;
  line-height: 20px;
  color: #999;
}

.controls {
  display: flex;
}

.controls button {
  width: 61px;
  height: 38px;
}

.controls svg {
  width: 16px;
  height: 16px;
  fill: none;
  stroke: #888;
  stroke-width: 1;
}

.menubar {
  display: flex;
  align-items: center;
  height: 34px;
  padding-left: 8px;
  border-bottom: 4px solid #be0a10;
  font-size: 16px;
  line-height: 20px;
  color: #949494;
}

.docicon {
  width: 19px;
  height: 29px;
}

.menu {
  margin-left: 11px;
  padding-bottom: 2px;
}

.menu + .menu {
  margin-left: 18px;
}

.layers {
  width: 32px;
  height: 32px;
  margin-left: 9px;
  background: #dadada;
}

.layers svg {
  width: 32px;
  height: 32px;
}

.brand {
  margin-left: auto;
  padding-bottom: 6px;
  font-family: "DejaVu Sans Condensed", "DejaVu Sans", sans-serif;
  font-size: 26px;
  line-height: 28px;
  color: #222;
}

.macron {
  position: relative;
}

.macron::before {
  content: "";
  position: absolute;
  top: 2px;
  left: 3px;
  width: 11px;
  height: 3px;
  background: #c8343a;
}

.mdi-controls {
  display: flex;
  gap: 2px;
  margin-left: 17px;
}

.mdi-controls button {
  width: 24px;
  height: 31px;
  background: #e3e3e3;
}

.mdi-controls svg {
  display: block;
  width: 24px;
  height: 31px;
  fill: none;
  stroke: #8e9ba8;
}

.bars {
  display: flex;
  flex-direction: column;
  gap: 2px;
}

.row {
  display: flex;
  gap: 4px;
}

.group {
  display: flex;
  gap: 9px;
  padding: 2px 13px 7px 4px;
  border-bottom-right-radius: 6px;
  border-bottom-left-radius: 6px;
  background: linear-gradient(#e2e2e2, #d0d0d0 50%, #b9b9b9);
}

.group.run {
  padding-right: 11px;
}

.second .group {
  padding-top: 6px;
}

.grip {
  width: 4px;
  height: 32px;
  margin-right: -5px;
  background: repeating-linear-gradient(#1874c8 0 4px, transparent 4px 7px);
}

.sep {
  width: 1px;
  height: 32px;
  margin: 0 2px;
  background: #b4b4b4;
}

.tool {
  width: 30px;
  height: 32px;
  flex: none;
  background: #d9d9d9;
}

.tool svg {
  display: block;
  width: 30px;
  height: 30px;
  fill: none;
}

.tool.off {
  background: none;
}

.tool.drop,
.tool.drop svg {
  width: 11px;
}

.fields {
  display: flex;
  gap: 5px;
  margin-left: -4px;
}

.fields input {
  box-sizing: border-box;
  height: 27px;
  margin: 2px 0 0;
  padding: 0 6px;
  border: 1px solid #777;
  border-radius: 0;
  background: #fff;
  font-family: "Open Sans", sans-serif;
  font-size: 15px;
  color: #000;
}

.fields .profile {
  width: 188px;
}

.fields .value {
  width: 135px;
}

.body {
  display: flex;
  align-items: flex-start;
  gap: 3px;
  padding-top: 3px;
}

.sidebar {
  display: flex;
  flex: none;
  flex-direction: column;
  align-items: center;
  gap: 10px;
  width: 42px;
  box-sizing: border-box;
  padding: 3px 0 12px;
  border-radius: 0 5px 5px 0;
  background: linear-gradient(90deg, #e6e6e6, #b6b6b6);
}

.hgrip {
  width: 32px;
  height: 4px;
  margin-bottom: -5px;
  background: repeating-linear-gradient(90deg, #1874c8 0 4px, transparent 4px 7px);
}

.hsep {
  width: 38px;
  height: 3px;
  margin: -3px 0;
  background: #f0f0f0;
}

.mdi {
  flex: 1;
  min-width: 0;
  border-top: 1px solid #9a9a9a;
  border-bottom: 3px solid #fff;
}

.frame {
  margin: 10px 7px 0 11px;
  padding: 4px 6px 7px 5px;
  border: 2px solid #fff;
  border-right-color: #333;
  border-bottom-color: #333;
}

.plot {
  position: relative;
  z-index: 1;
  display: block;
  box-sizing: border-box;
  width: 100%;
  border: 2px solid #fff;
  border-top-color: #888;
  border-left-color: #888;
  overflow: visible;
}

.dash line {
  stroke: #b4b4b4;
  stroke-width: 1;
  stroke-dasharray: 4 3;
  shape-rendering: crispEdges;
}

.dash .column {
  stroke-dasharray: 4 4;
}

.axis {
  fill: none;
  stroke: #a8a8a8;
  shape-rendering: crispEdges;
}

.trace {
  fill: none;
  stroke-width: 1;
  shape-rendering: crispEdges;
}

.markers {
  stroke-width: 1;
  shape-rendering: crispEdges;
}

.labels {
  font-family: "Liberation Mono", monospace;
  font-size: 15px;
  fill: #b4b4b4;
}

.callout {
  fill: none;
  stroke: #f40808;
  stroke-width: 4;
}

.callout .leader {
  stroke-width: 5;
}

.remarks {
  font-size: 37px;
  fill: #f40808;
}

.remarks .num {
  font-family: "Noto Sans CJK KR", sans-serif;
}

.remarks .ko,
.notes .ko {
  font-family: "Noto Sans CJK KR", sans-serif;
  font-size: 40px;
  line-height: 0;
}

.tabs {
  display: flex;
  height: 35px;
  border-bottom: 1px solid #a0a0a0;
  box-sizing: border-box;
}

.tab {
  display: flex;
  align-items: center;
  gap: 6px;
  height: 32px;
  margin: -2px 0 0 17px;
  padding: 0 5px 0 4px;
  border-right: 2px solid #222;
  border-bottom: 2px solid #222;
  border-bottom-left-radius: 4px;
  background: #efefef;
  font-size: 16px;
  color: #111;
}

.tab svg {
  width: 18px;
  height: 22px;
}

.notes {
  display: flex;
  justify-content: space-between;
  margin-top: 62px;
  padding: 0 44px 0 196px;
  font-size: 36px;
  line-height: 45px;
  color: #000;
}

.note {
  display: flex;
}

.mark {
  width: 48px;
  flex: none;
  font-family: "Noto Sans CJK KR", sans-serif;
  line-height: 38px;
  color: #1010e0;
}

.blue {
  color: #1010e0;
}

.finish p {
  width: 300px;
}
</style>
